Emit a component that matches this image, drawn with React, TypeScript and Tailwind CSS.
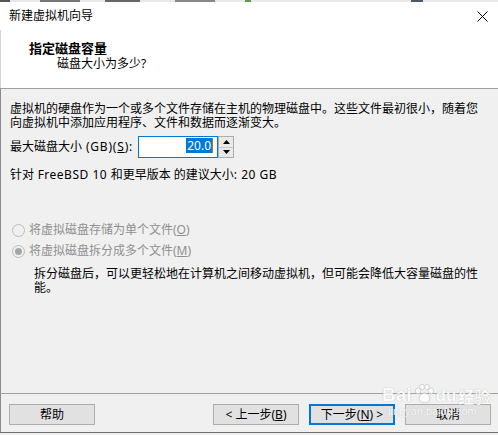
import React from "react";

const font = { fontFamily: '"Noto Sans", "Noto Sans CJK SC", sans-serif' };

function Radio({ checked }: { checked?: boolean }) {
  return (
    <div className="w-[13px] h-[13px] rounded-full border border-[#bcbcbc] bg-[#f0f0f0] flex items-center justify-center">
      {checked && <div className="w-[7px] h-[7px] rounded-full bg-[#a6a6a6]" />}
    </div>
  );
}

function Btn({ children, primary }: { children: React.ReactNode; primary?: boolean }) {
  return (
    <div
      className={
        "w-[86px] h-[21px] flex items-center justify-center text-[12px] leading-[14px] bg-[#e1e1e1] text-black " +
        (primary ? "border-2 border-[#0078d7]" : "border border-[#adadad]")
      }
    >
      {children}
    </div>
  );
}

export default function App() {
  return (
    <div className="w-[498px] h-[435px] bg-[#f0f0f0] flex flex-col text-black relative overflow-hidden" style={font}>
      {/* top strip from behind */}
      <div className="h-[2px] flex bg-[#e8e8e8]">
        <div className="w-[10px] bg-[#555]" />
        <div className="w-[30px]" />
        <div className="w-[40px] bg-[#777]" />
        <div className="w-[25px]" />
        <div className="w-[35px] bg-[#666]" />
        <div className="w-[35px]" />
        <div className="w-[40px] bg-[#888]" />
        <div className="w-[30px]" />
        <div className="w-[6px] bg-[#5a9a4a]" />
        <div className="w-[160px]" />
        <div className="w-[12px] bg-[#4a5a6a]" />
      </div>
      {/* title bar */}
      <div className="h-[28px] bg-white flex items-center justify-between pl-[9px] pr-[10px]">
        <span className="text-[12px] leading-none">新建虚拟机向导</span>
        <svg width="11" height="11" viewBox="0 0 11 11">
          <path d="M0.5 0.5 L10.5 10.5 M10.5 0.5 L0.5 10.5" stroke="#000" strokeWidth="1" fill="none" />
        </svg>
      </div>
      {/* header */}
      <div className="h-[58px] bg-white pt-[10px] border-l border-[#d4d4d4]">
        <div className="pl-[28px] text-[13px] font-bold leading-[16px]">指定磁盘容量</div>
        <div className="pl-[56px] text-[12px] leading-[16px]">磁盘大小为多少?</div>
      </div>
      <div className="h-px bg-[#a0a0a0]" />
      {/* content */}
      <div className="flex-1 border-l border-[#8a8a8a] pl-[9px] pt-[13px] text-[12px]">
        <div className="leading-[14px] whitespace-nowrap">
          虚拟机的硬盘作为一个或多个文件存储在主机的物理磁盘中。这些文件最初很小，随着您
          <br />
          向虚拟机中添加应用程序、文件和数据而逐渐变大。
        </div>
        <div className="mt-[6px] flex items-center h-[22px]">
          <span className="leading-[14px] whitespace-nowrap w-[123px]">
            最大磁盘大小<span className="tracking-[0.8px]"> (GB)(<span className="underline">S</span>):</span>
          </span>
          <div className="ml-[5px] w-[80px] h-[22px] border border-[#0078d7] bg-white flex justify-end items-start pt-[1px] pr-[4px]">
            <span className="bg-[#0078d7] text-white leading-[15px] text-[12px] px-[1px]">20.0</span>
            <span className="w-px h-[15px] bg-[#e06020]" />
          </div>
          <div className="w-[16px] h-[22px] border border-[#adadad] bg-[#f0f0f0] flex flex-col">
            <div className="flex-1 flex items-center justify-center border-b border-[#c8c8c8] bg-[#e9e9e9]">
              <svg width="7" height="4" viewBox="0 0 7 4">
                <path d="M3.5 0 L7 4 L0 4 Z" fill="#000" />
              </svg>
            </div>
            <div className="flex-1 flex items-center justify-center bg-[#e9e9e9]">
              <svg width="7" height="4" viewBox="0 0 7 4">
                <path d="M0 0 L7 0 L3.5 4 Z" fill="#000" />
              </svg>
            </div>
          </div>
        </div>
        <div className="mt-[10px] leading-[14px] whitespace-nowrap">
          针对<span className="tracking-[0.5px]"> FreeBSD 10 </span>和更早版本 的建议大小<span className="tracking-[0.5px]">: 20 GB</span>
        </div>

        <div className="mt-[40px] flex items-center h-[16px] gap-[4px] pl-[2px] text-[#8f8f8f]">
          <Radio />
          <span className="leading-[14px]">
            将虚拟磁盘存储为单个文件(<span className="underline">O</span>)
          </span>
        </div>
        <div className="mt-[5px] flex items-center h-[16px] gap-[4px] pl-[2px] text-[#8f8f8f]">
          <Radio checked />
          <span className="leading-[14px]">
            将虚拟磁盘拆分成多个文件(<span className="underline">M</span>)
          </span>
        </div>
        <div className="mt-[8px] pl-[24px] leading-[14px] whitespace-nowrap">
          拆分磁盘后，可以更轻松地在计算机之间移动虚拟机，但可能会降低大容量磁盘的性
          <br />
          能。
        </div>
      </div>
      {/* footer */}
      <div className="h-px bg-[#a0a0a0]" />
      <div className="border-l border-[#8a8a8a] h-[38px] pt-[10px] pl-[8px] pr-[7px] flex items-start">
        <Btn>帮助</Btn>
        <div className="flex-1" />
        <div className="flex gap-[10px]">
          <Btn>
            &lt; 上一步(<span className="underline">B</span>)
          </Btn>
          <Btn primary>
            下一步(<span className="underline">N</span>) &gt;
          </Btn>
          <Btn>取消</Btn>
        </div>
      </div>
      <div className="h-px bg-[#6e6e6e]" />
      <div className="h-[2px] bg-[#f0f0f0]" />

      {/* watermark */}
      <div className="absolute left-[382px] top-[384px] pointer-events-none opacity-80">
        <div className="flex items-end text-white font-bold [text-shadow:0_0_1px_#9a9a9a] leading-none" style={{ fontFamily: '"Liberation Sans", sans-serif' }}>
          <span className="text-[19px]">Bai</span>
          <svg width="22" height="20" viewBox="0 0 22 20" className="mx-[1px]">
            <g fill="#fff" stroke="#b0b0b0" strokeWidth="0.6">
              <ellipse cx="5" cy="7" rx="2.5" ry="3" />
              <ellipse cx="9" cy="3" rx="2.3" ry="2.8" />
              <ellipse cx="14" cy="3" rx="2.3" ry="2.8" />
              <ellipse cx="18" cy="7" rx="2.5" ry="3" />
              <path d="M11.5 9 C7 9 5 15 7 17 C9 19 14 19 16 17 C18 15 16 9 11.5 9 Z" />
            </g>
          </svg>
          <span className="text-[17px]">du</span>
          <span className="text-[16px] ml-[2px]" style={{ fontFamily: '"Noto Sans CJK SC", sans-serif' }}>经验</span>
        </div>
        <div className="text-[11px] text-white [text-shadow:0_0_1px_#b0b0b0] leading-none mt-[2px] ml-[6px]" style={{ fontFamily: '"Liberation Sans", sans-serif' }}>
          jingyan.baidu.com
        </div>
      </div>
    </div>
  );
}
